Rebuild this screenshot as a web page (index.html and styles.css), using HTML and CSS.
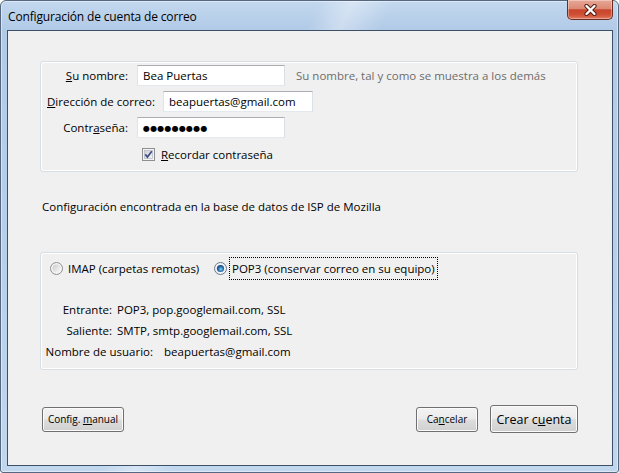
FILE: index.html
```html
<!DOCTYPE html>
<html lang="es">
<head>
<meta charset="utf-8">
<title>Configuración de cuenta de correo</title>
<link rel="stylesheet" href="styles.css">
</head>
<body>
<div class="window">
  <div class="titlebar">
    <span class="title">Configuración de cuenta de correo</span>
    <div class="close" aria-label="Cerrar">
      <svg width="15" height="12" viewBox="0 0 15 12">
        <path d="M3.5 2 L11.5 10 M11.5 2 L3.5 10" stroke="#4a1b10" stroke-width="4.2" stroke-linecap="round" fill="none"/>
        <path d="M3.5 2 L11.5 10 M11.5 2 L3.5 10" stroke="#ffffff" stroke-width="2.4" stroke-linecap="round" fill="none"/>
      </svg>
    </div>
  </div>
  <div class="client">
    <div class="group identity">
      <div class="row">
        <span class="lbl lbl-short"><u>S</u>u nombre:</span>
        <div class="input input-short">Bea Puertas</div>
        <span class="hint">Su nombre, tal y como se muestra a los demás</span>
      </div>
      <div class="row">
        <span class="lbl lbl-long"><u>D</u>irección de correo:</span>
        <div class="input input-long">beapuertas@gmail.com</div>
      </div>
      <div class="row">
        <span class="lbl lbl-short">Contr<u>a</u>seña:</span>
        <div class="input input-short"><span class="dots">●●●●●●●●●</span></div>
      </div>
      <div class="check-row">
        <svg class="checkbox" width="13" height="13" viewBox="0 0 13 13">
          <defs>
            <linearGradient id="cbg" x1="0" y1="0" x2="1" y2="1">
              <stop offset="0" stop-color="#cbcfd5"/>
              <stop offset="1" stop-color="#f6f6f6"/>
            </linearGradient>
          </defs>
          <rect x="0.5" y="0.5" width="12" height="12" fill="#f4f4f4" stroke="#8e8f8f"/>
          <rect x="2.5" y="2.5" width="8" height="8" fill="url(#cbg)" stroke="#b9bec6" stroke-width="0.8"/>
          <path d="M3.3 6.4 L5.4 9 L9.8 3.2" stroke="#3d4f86" stroke-width="1.7" fill="none"/>
        </svg>
        <span class="check-text"><u>R</u>ecordar contraseña</span>
      </div>
    </div>

    <p class="found">Configuración encontrada en la base de datos de ISP de Mozilla</p>

    <div class="group protocol">
      <div class="radios">
        <div class="option option-imap">
          <svg class="radio" width="13" height="13" viewBox="0 0 13 13">
            <defs>
              <linearGradient id="rg" x1="0" y1="0" x2="1" y2="1">
                <stop offset="0" stop-color="#c9c9c9"/>
                <stop offset="1" stop-color="#fbfbfb"/>
              </linearGradient>
            </defs>
            <circle cx="6.5" cy="6.5" r="6" fill="#f3f3f3" stroke="#8f8f8f"/>
            <circle cx="6.5" cy="6.5" r="4" fill="url(#rg)"/>
          </svg>
          <span class="opt-text">IMAP (carpetas remotas)</span>
        </div>
        <div class="option option-pop">
          <svg class="radio" width="13" height="13" viewBox="0 0 13 13">
            <defs>
              <radialGradient id="rs" cx="0.55" cy="0.6" r="0.6">
                <stop offset="0" stop-color="#8fd2f5"/>
                <stop offset="0.5" stop-color="#2f79b8"/>
                <stop offset="1" stop-color="#163d66"/>
              </radialGradient>
            </defs>
            <circle cx="6.5" cy="6.5" r="6" fill="#eef2f6" stroke="#6b7a8c"/>
            <circle cx="6.5" cy="6.5" r="3.6" fill="url(#rs)"/>
          </svg>
          <span class="opt-text focused">POP3 (conservar correo en su equipo)</span>
        </div>
      </div>
      <div class="info">
        <div class="info-row"><span class="info-lbl info-lbl-short">Entrante:</span><span class="info-val">POP3, pop.googlemail.com, SSL</span></div>
        <div class="info-row"><span class="info-lbl info-lbl-short">Saliente:</span><span class="info-val">SMTP, smtp.googlemail.com, SSL</span></div>
        <div class="info-row"><span class="info-lbl info-lbl-long">Nombre de usuario:</span><span class="info-val">beapuertas@gmail.com</span></div>
      </div>
    </div>

    <div class="buttons">
      <button class="btn btn-manual"><span class="btn-label">Config. <u>m</u>anual</span></button>
      <span class="spacer"></span>
      <button class="btn btn-cancel"><span class="btn-label">Ca<u>n</u>celar</span></button>
      <button class="btn btn-create"><span class="btn-label">Crear c<u>u</u>enta</span></button>
    </div>
  </div>
</div>
</body>
</html>
```

FILE: styles.css
```css
* { box-sizing: border-box; }

html, body {
  margin: 0;
  padding: 0;
}

body {
  width: 619px;
  height: 473px;
  overflow: hidden;
  background: #ffffff;
  font-family: "Open Sans", "Noto Sans", "DejaVu Sans", sans-serif;
  font-size: 11.5px;
  color: #000000;
}

.window {
  position: relative;
  width: 619px;
  height: 473px;
  border: 1px solid #55687f;
  border-radius: 6px 6px 3px 3px;
  background:
    linear-gradient(115deg, rgba(255,255,255,0) 0%, rgba(255,255,255,0) 38%, rgba(255,255,255,0.35) 42%, rgba(255,255,255,0) 47%, rgba(255,255,255,0) 100%),
    linear-gradient(180deg, #c3d8ef 0%, #b1cae6 6%, #b8d0ea 60%, #c1d7ee 100%);
  box-shadow: inset 0 0 0 1px rgba(255,255,255,0.45);
  display: flex;
  flex-direction: column;
}

.titlebar {
  flex: none;
  height: 29px;
  display: flex;
  align-items: center;
  padding: 1px 0 0 7px;
}

.title {
  font-size: 12px;
  color: #000;
  letter-spacing: -0.15px;
}

.close {
  position: absolute;
  top: -1px;
  right: 5px;
  width: 46px;
  height: 20px;
  border: 1px solid #6e2b1f;
  border-top: none;
  border-radius: 0 0 5px 5px;
  background: linear-gradient(180deg, #e7a797 0%, #dc8a74 45%, #c7452c 52%, #cf5035 78%, #e07b5f 100%);
  box-shadow: inset 0 0 0 1px rgba(255,255,255,0.35);
  display: flex;
  align-items: center;
  justify-content: center;
}

.client {
  flex: 1;
  margin: 0 5px 6px 6px;
  border: 1px solid #3e5067;
  background: #f0f0f0;
  display: flex;
  flex-direction: column;
}

.group {
  margin-left: 32px;
  width: 538px;
  border: 1px solid #d5dfe5;
  border-radius: 3px;
  box-shadow: inset 0 0 0 1px #ffffff;
}

.identity {
  margin-top: 30px;
  height: 111px;
  padding-top: 3px;
}

.row {
  display: flex;
  align-items: center;
  height: 21px;
}

.row + .row {
  margin-top: 5px;
}

.lbl {
  flex: none;
  text-align: right;
  white-space: nowrap;
}

.lbl-short {
  width: 87px;
  margin-right: 9px;
}

.lbl-long {
  width: 114px;
  margin-right: 8px;
}

.input {
  flex: none;
  height: 21px;
  background: #ffffff;
  border: 1px solid;
  border-color: #abadb3 #dbdfe6 #e3e9ef #e2e3ea;
  padding: 0 5px;
  line-height: 19px;
  white-space: nowrap;
}

.input-short { width: 148px; }
.input-long { width: 150px; }

.dots {
  font-family: "DejaVu Sans", sans-serif;
  font-size: 8px;
  letter-spacing: 0.2px;
  position: relative;
  top: -1px;
}

.hint {
  margin-left: 11px;
  color: #6d6d6d;
  white-space: nowrap;
}

.check-row {
  display: flex;
  align-items: center;
  height: 13px;
  margin-top: 10px;
  padding-left: 101px;
}

.checkbox {
  flex: none;
  display: block;
}

.check-text {
  margin-left: 6px;
}

.found {
  margin: 27px 0 0 34px;
  line-height: 16px;
}

.protocol {
  margin-top: 37px;
  height: 118px;
  padding-top: 4px;
}

.radios {
  display: flex;
  align-items: center;
  height: 23px;
}

.option {
  display: flex;
  align-items: center;
  flex: none;
}

.option-imap {
  width: 173px;
  padding-left: 9px;
}

.option-imap .opt-text {
  margin-left: 5px;
}

.radio {
  display: block;
  flex: none;
}

.option-pop .opt-text {
  margin-left: 2px;
}

.focused {
  border: 1px dotted #000000;
  padding: 0 2px;
  height: 23px;
  line-height: 21px;
}

.info {
  margin-top: 19px;
}

.info-row {
  display: flex;
  height: 21px;
  line-height: 21px;
}

.info-lbl {
  flex: none;
  text-align: right;
  white-space: nowrap;
}

.info-lbl-short {
  width: 71px;
  margin-right: 5px;
}

.info-lbl-long {
  width: 112px;
  margin-right: 11px;
}

.buttons {
  display: flex;
  align-items: center;
  height: 28px;
  margin-top: 35px;
  padding: 0 34px;
}

.spacer { flex: 1; }

.btn {
  flex: none;
  margin: 0;
  padding: 0;
  height: 25px;
  border: 1px solid #707070;
  border-radius: 3px;
  background: linear-gradient(180deg, #f3f3f3 0%, #ebebeb 48%, #dddddd 52%, #d0d0d0 100%);
  box-shadow: inset 0 0 0 1px #fbfbfb;
  font-family: "Open Sans", "Noto Sans", "DejaVu Sans", sans-serif;
  font-size: 10px;
  color: #000;
  display: flex;
  align-items: center;
  justify-content: center;
}

.btn-label {
  white-space: nowrap;
}

.btn-manual { width: 82px; }
.btn-cancel { width: 62px; }

.btn-create {
  width: 88px;
  height: 28px;
  margin-left: 12px;
  font-size: 12.5px;
}
```
